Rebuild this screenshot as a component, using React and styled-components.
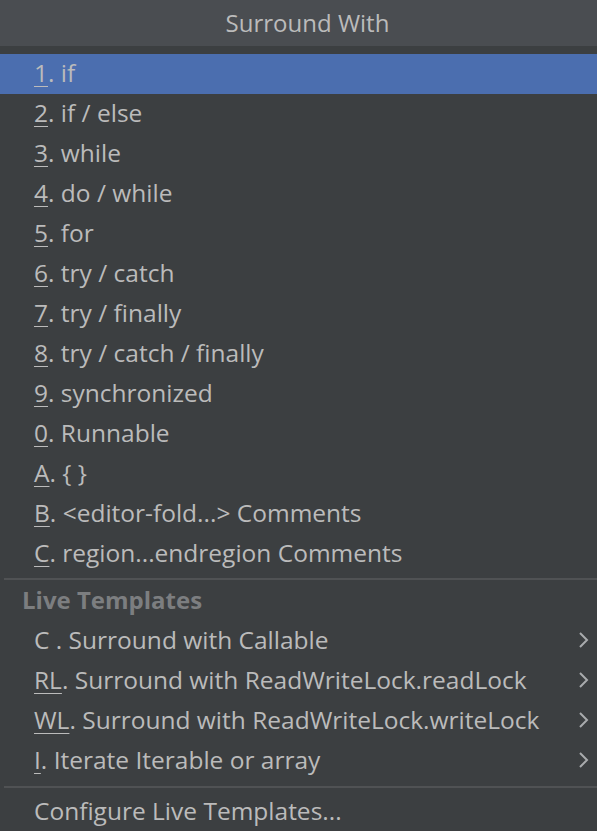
import React from 'react'
import styled, { createGlobalStyle } from 'styled-components'

const GlobalStyle = createGlobalStyle`
  html, body {
    margin: 0;
    padding: 0;
    background: #3c3f41;
  }
  body {
    font-family: "Open Sans", "Noto Sans", sans-serif;
  }
`

const items = [
  { key: '1', label: 'if' },
  { key: '2', label: 'if / else' },
  { key: '3', label: 'while' },
  { key: '4', label: 'do / while' },
  { key: '5', label: 'for' },
  { key: '6', label: 'try / catch' },
  { key: '7', label: 'try / finally' },
  { key: '8', label: 'try / catch / finally' },
  { key: '9', label: 'synchronized' },
  { key: '0', label: 'Runnable' },
  { key: 'A', label: '{ }' },
  { key: 'B', label: '<editor-fold...> Comments' },
  { key: 'C', label: 'region...endregion Comments' }
]

const templates = [
  { key: 'C ', label: 'Surround with Callable', plain: true },
  { key: 'RL', label: 'Surround with ReadWriteLock.readLock' },
  { key: 'WL', label: 'Surround with ReadWriteLock.writeLock' },
  { key: 'I', label: 'Iterate Iterable or array' }
]

const Chevron = () => (
  <svg width='12' height='20' viewBox='0 0 12 20'>
    <path d='M2 3 L9 10 L2 17' fill='none' stroke='#a9abad' strokeWidth='2' />
  </svg>
)

const App = () => (
  <Popup>
    <GlobalStyle />
    <Header>Surround With</Header>
    <List>
      {items.map((item, i) => (
        <Row key={item.key} selected={i === 0}>
          <Text>
            <Mnemonic>{item.key}</Mnemonic>. {item.label}
          </Text>
        </Row>
      ))}
    </List>
    <Separator $top={4} />
    <Group>Live Templates</Group>
    {templates.map((t) => (
      <Row key={t.key}>
        <Text>
          {t.plain ? t.key : <Mnemonic>{t.key}</Mnemonic>}. {t.label}
        </Text>
        <Chevron />
      </Row>
    ))}
    <Separator $top={5} $bottom={4} />
    <Row>
      <Text>Configure Live Templates...</Text>
    </Row>
  </Popup>
)

const Popup = styled.div`
  width: 597px;
  height: 831px;
  background: #3c3f41;
  color: #bbbbbb;
  overflow: hidden;
`

const Header = styled.div`
  height: 46px;
  box-sizing: border-box;
  padding: 0 0 2px 18px;
  background: #4a4d51;
  display: flex;
  align-items: center;
  justify-content: center;
  font-size: 24px;
  color: #bbbbbb;
  margin-bottom: 8px;
`

const List = styled.div`
  display: flex;
  flex-direction: column;
`

const Row = styled.div.withConfig({ shouldForwardProp: (p) => p !== 'selected' })`
  height: 40px;
  box-sizing: border-box;
  flex-shrink: 0;
  display: flex;
  align-items: center;
  justify-content: space-between;
  padding: 0 7px 3px 34px;
  background: ${(p) => (p.selected ? '#4b6eaf' : 'transparent')};
  font-size: 24.5px;
  white-space: nowrap;
`

const Text = styled.span``

const Mnemonic = styled.span`
  text-decoration: underline;
  text-underline-offset: 4px;
  text-decoration-thickness: 1px;
`

const Separator = styled.div`
  height: 2px;
  background: #505254;
  margin: ${(p) => p.$top || 0}px 0 ${(p) => p.$bottom || 0}px 4px;
`

const Group = styled.div`
  height: 41px;
  box-sizing: border-box;
  padding: 0 0 2px 22px;
  display: flex;
  align-items: center;
  font-size: 24px;
  font-weight: bold;
  color: #7c7e80;
`

export default App
